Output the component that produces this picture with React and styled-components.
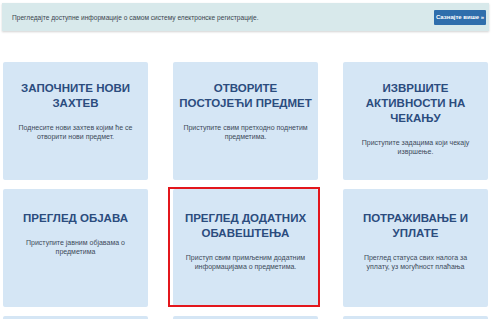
import React from "react";
import styled, { createGlobalStyle } from "styled-components";

const Global = createGlobalStyle`
  html, body { margin: 0; padding: 0; background: #ffffff; }
  body { font-family: "Liberation Sans", Arial, sans-serif; overflow: hidden; }
`;

const Page = styled.div`
  width: 491px;
  height: 319px;
  overflow: hidden;
  padding: 3px 2px 0 2px;
  box-sizing: border-box;
`;

const Banner = styled.div`
  display: flex;
  align-items: center;
  justify-content: space-between;
  height: 28px;
  background: #d8e9eb;
  box-shadow: 0 1px 2px rgba(0, 0, 0, 0.18);
  padding: 0 3px 0 10px;
  box-sizing: border-box;
`;

const BannerText = styled.span`
  font-size: 6.6px;
  color: #3b4650;
`;

const MoreButton = styled.button`
  height: 15px;
  width: 52px;
  border: none;
  border-radius: 1px;
  background: #2f6eac;
  color: #ffffff;
  font-family: "Liberation Sans", Arial, sans-serif;
  font-size: 6px;
  font-weight: bold;
  padding: 0;
  white-space: nowrap;
`;

const Grid = styled.div`
  display: grid;
  grid-template-columns: repeat(3, 145px);
  grid-auto-rows: 118px;
  column-gap: 25px;
  row-gap: 9px;
  margin-top: 31px;
  margin-left: 1px;
`;

const Card = styled.div`
  position: relative;
  background: #d5e6f5;
  border-radius: 2px;
  padding: ${(p) => (p.$low ? "22px" : "19px")} 3px 0 3px;
  box-sizing: border-box;
  text-align: center;
`;

const Title = styled.div`
  font-size: 11.5px;
  font-weight: bold;
  line-height: 15px;
  color: #2b4c7e;
  text-transform: uppercase;
  padding: 0 ${(p) => (p.$narrow ? "12px" : "0")};
`;

const Desc = styled.div`
  margin-top: 13px;
  font-size: 7px;
  line-height: 8.5px;
  color: #3d4a5a;
  padding: 0 ${(p) => (p.$narrow ? "14px" : "4px")};
`;

const Highlight = styled.span`
  position: absolute;
  left: -5px;
  top: -2px;
  right: -2px;
  bottom: 0;
  border: 2px solid #e3161c;
  pointer-events: none;
`;

const cards = [
  { title: "Започните нови захтев", desc: "Поднесите нови захтев којим ће се отворити нови предмет." },
  { title: "Отворите постојећи предмет", desc: "Приступите свим претходно поднетим предметима." },
  { title: "Извршите активности на чекању", desc: "Приступите задацима који чекају извршење.", narrow: true },
  { title: "Преглед објава", desc: "Приступите јавним објавама о предметима", low: true },
  { title: "Преглед додатних обавештења", desc: "Приступ свим примљеним додатним информацијама о предметима.", low: true, marked: true },
  { title: "Потраживање и уплате", desc: "Преглед статуса свих налога за уплату, уз могућност плаћања", low: true, narrow: true },
  { title: "", desc: "" },
  { title: "", desc: "" },
  { title: "", desc: "" },
];

export default function App() {
  return (
    <Page>
      <Global />
      <Banner>
        <BannerText>Прегледајте доступне информације о самом систему електронске регистрације.</BannerText>
        <MoreButton>Сазнајте више »</MoreButton>
      </Banner>
      <Grid>
        {cards.map((c, i) => (
          <Card key={i} $low={c.low}>
            <Title $narrow={c.narrow}>{c.title}</Title>
            {c.desc && <Desc $narrow={c.narrow}>{c.desc}</Desc>}
            {c.marked && <Highlight />}
          </Card>
        ))}
      </Grid>
    </Page>
  );
}
